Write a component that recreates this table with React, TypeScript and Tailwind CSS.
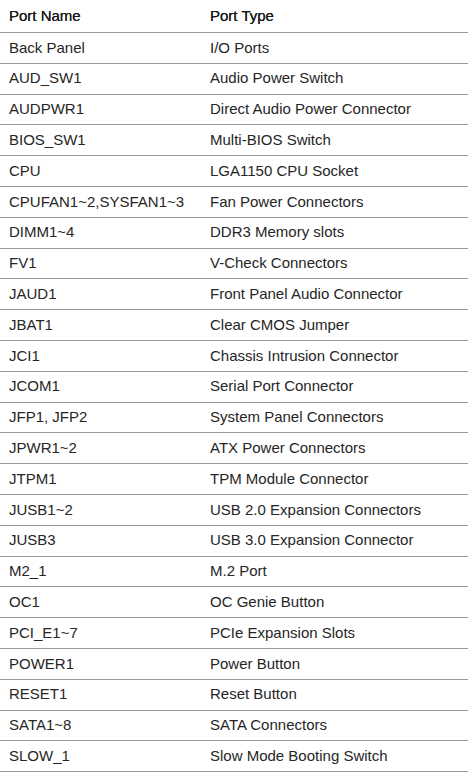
const rows: [string, string][] = [
  ['Back Panel', 'I/O Ports'],
  ['AUD_SW1', 'Audio Power Switch'],
  ['AUDPWR1', 'Direct Audio Power Connector'],
  ['BIOS_SW1', 'Multi-BIOS Switch'],
  ['CPU', 'LGA1150 CPU Socket'],
  ['CPUFAN1~2,SYSFAN1~3', 'Fan Power Connectors'],
  ['DIMM1~4', 'DDR3 Memory slots'],
  ['FV1', 'V-Check Connectors'],
  ['JAUD1', 'Front Panel Audio Connector'],
  ['JBAT1', 'Clear CMOS Jumper'],
  ['JCI1', 'Chassis Intrusion Connector'],
  ['JCOM1', 'Serial Port Connector'],
  ['JFP1, JFP2', 'System Panel Connectors'],
  ['JPWR1~2', 'ATX Power Connectors'],
  ['JTPM1', 'TPM Module Connector'],
  ['JUSB1~2', 'USB 2.0 Expansion Connectors'],
  ['JUSB3', 'USB 3.0 Expansion Connector'],
  ['M2_1', 'M.2 Port'],
  ['OC1', 'OC Genie Button'],
  ['PCI_E1~7', 'PCIe Expansion Slots'],
  ['POWER1', 'Power Button'],
  ['RESET1', 'Reset Button'],
  ['SATA1~8', 'SATA Connectors'],
  ['SLOW_1', 'Slow Mode Booting Switch'],
]

export default function App() {
  return (
    <div className="w-[468px] h-[774px] bg-white overflow-hidden font-['Liberation_Sans',Arial,sans-serif] text-[15px] text-[#262626]">
      <div className="flex h-[33px] items-center border-b border-[#9a9a9a] text-[#1a1a1a] [text-shadow:0_0_0.5px_#1a1a1a]">
        <div className="w-[201px] pl-[9px]">Port Name</div>
        <div className="pl-[9px]">Port Type</div>
      </div>
      {rows.map(([name, type]) => (
        <div key={name} className="flex h-[30.8px] items-center border-b border-[#9a9a9a]">
          <div className="w-[201px] pl-[9px] whitespace-nowrap">{name}</div>
          <div className="pl-[9px] whitespace-nowrap">{type}</div>
        </div>
      ))}
    </div>
  )
}
